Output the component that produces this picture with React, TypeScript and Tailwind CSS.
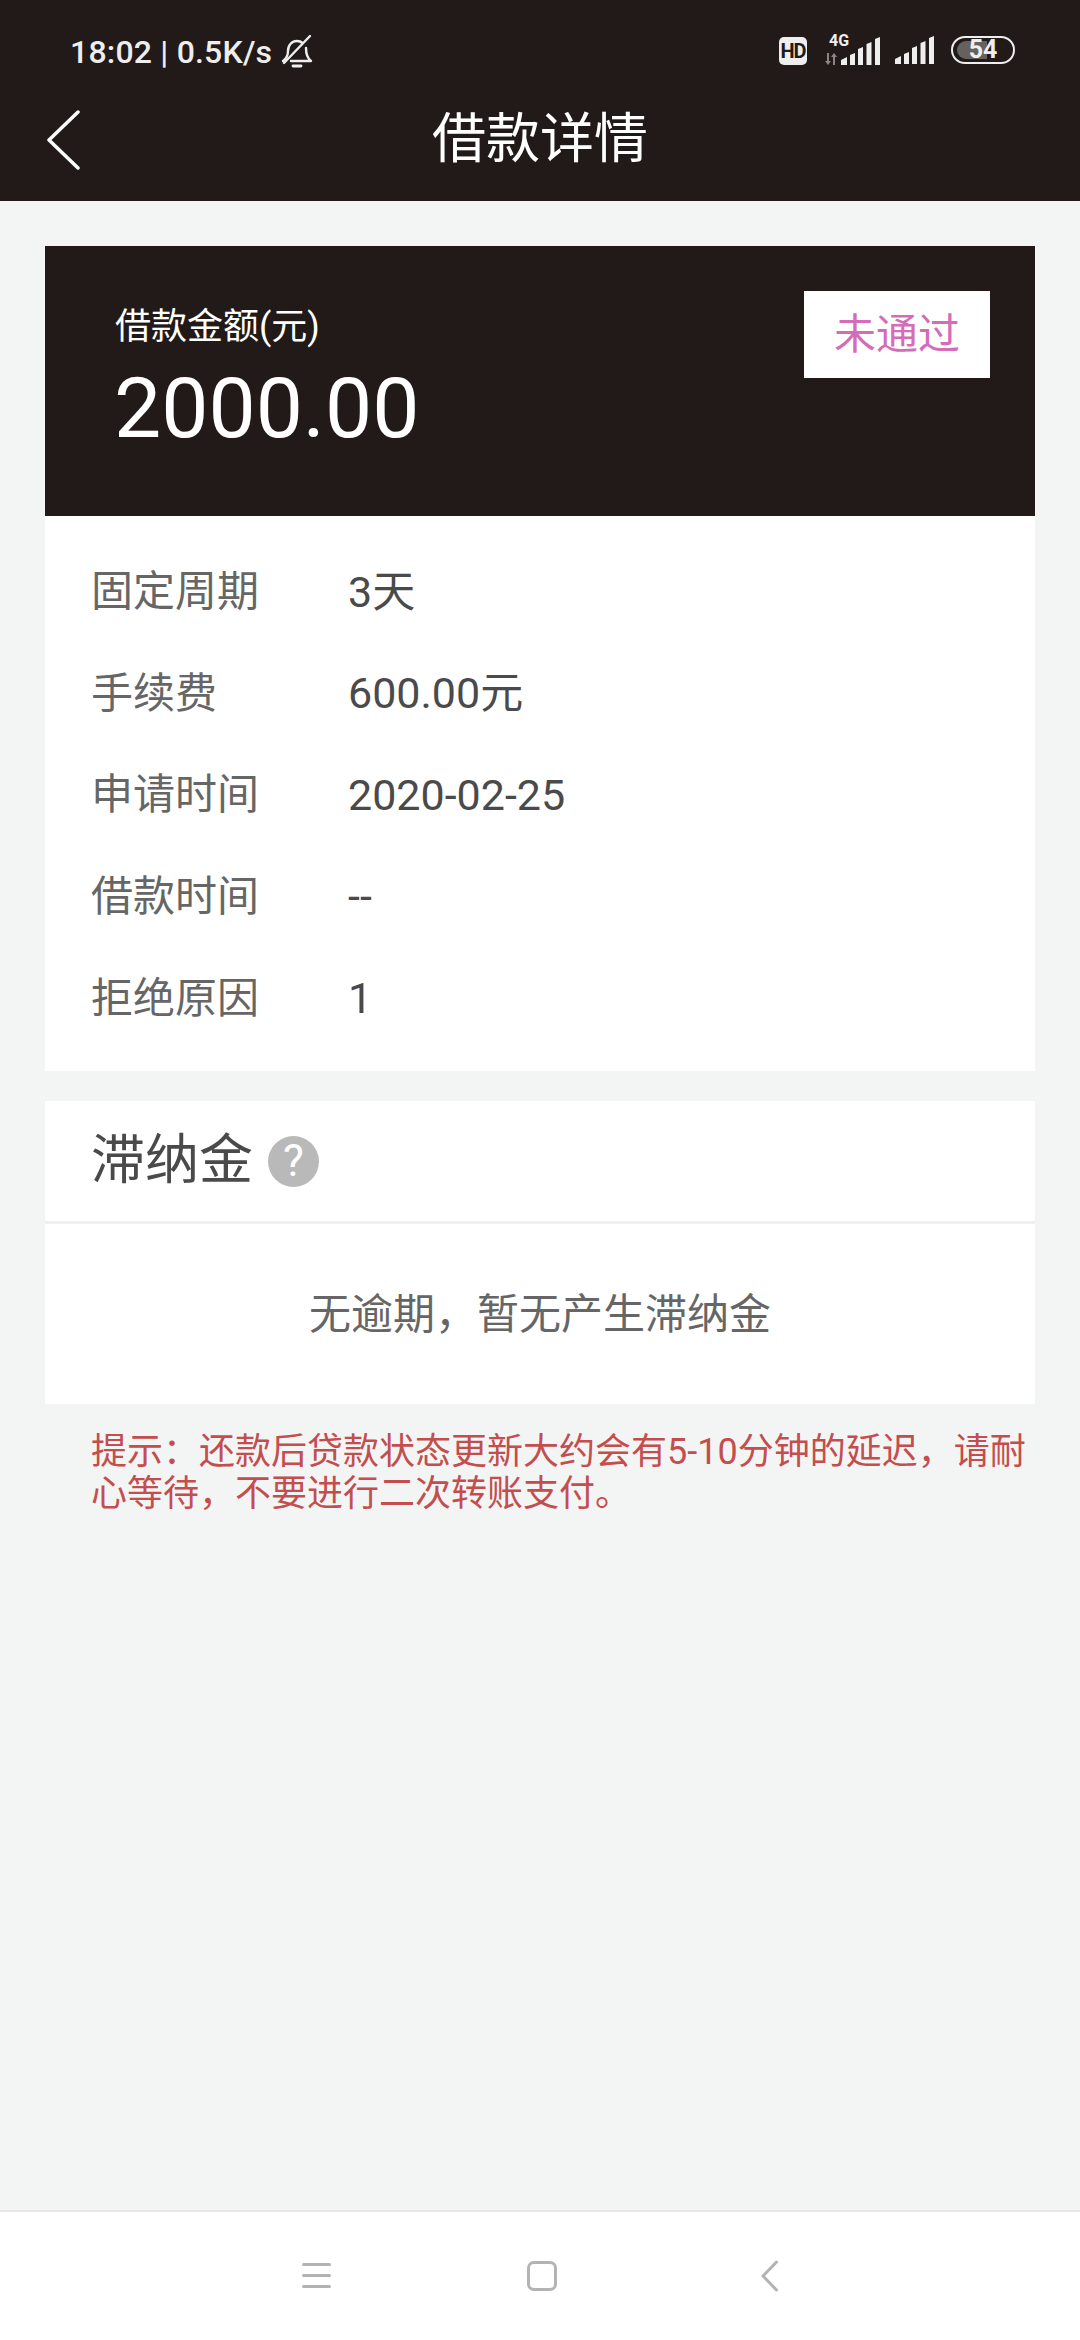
import React from "react";

const rows = [
  { label: "固定周期", value: "3天" },
  { label: "手续费", value: "600.00元" },
  { label: "申请时间", value: "2020-02-25" },
  { label: "借款时间", value: "--" },
  { label: "拒绝原因", value: "1" },
];

function Bars() {
  return (
    <svg width="40" height="28" viewBox="0 0 40 28" fill="#eeeeee">
      <path d="M0 28v-5l6-3v8z" />
      <path d="M9 28V18l5-2v12z" />
      <path d="M17 28V12l5-2v18z" />
      <path d="M25.500 28V7l5-2v23z" />
      <path d="M34 28V2l5-2v28z" />
    </svg>
  );
}

function StatusBar() {
  return (
    <div className="h-[78px] pt-[31px] pl-[70px] pr-[65px] flex items-start justify-between text-[#eeeeee]">
      <div className="flex items-center h-[42px]">
        <span className="text-[32px] leading-[42px] font-medium tracking-[0.2px]">18:02 | 0.5K/s</span>
        <svg className="ml-[9px] -mt-[2px]" width="32" height="34" viewBox="0 0 32 34" fill="none" stroke="#eeeeee" strokeWidth="2.4" strokeLinecap="round" strokeLinejoin="round">
          <path d="M2 27c3-2 5-5 5-10 0-6 4-10 9-10 2 0 4 .6 5.500 2" />
          <path d="M25 14c0 5 1 10 5 13H10" />
          <path d="M29 2 3 29" />
          <path d="M12 32h8" strokeWidth="2.8" />
        </svg>
      </div>
      <div className="flex items-start pt-[5px]">
        <div className="w-[28px] h-[28px] mt-[1px] rounded-[5px] bg-[#eeeeee] text-[#211a18] text-[20px] leading-[28px] font-bold text-center tracking-[-1px]">
          HD
        </div>
        <div className="ml-[17px] relative w-[57px] h-[29px]">
          <span className="absolute left-[5px] top-[-2px] text-[16px] leading-[14px] font-bold">4G</span>
          <svg className="absolute left-0 bottom-0" width="14" height="12" viewBox="0 0 14 12" fill="#8a8584">
            <path d="M3 0h2v8h2l-3 4-3-4h2z" />
            <path d="M9 12h2V4h2l-3-4-3 4h2z" />
          </svg>
          <div className="absolute right-0 bottom-0 h-[28px]">
            <Bars />
          </div>
        </div>
        <div className="ml-[14px] h-[29px]">
          <Bars />
        </div>
        <div className="ml-[16px] relative w-[64px] h-[28px] rounded-full border-[2.5px] border-[#eeeeee]">
          <div className="absolute left-[4px] top-[3px] bottom-[3px] w-[30px] rounded-l-full bg-[#66615f]" />
          <span className="absolute inset-0 text-center text-[25px] leading-[23px] font-bold">54</span>
        </div>
      </div>
    </div>
  );
}

export default function App() {
  return (
    <div className="w-[1080px] h-[2340px] flex flex-col bg-[#f3f5f5] font-['Roboto','Noto_Sans_CJK_SC',sans-serif]">
      <div className="h-[201px] bg-[#211a18] shrink-0">
        <StatusBar />
        <div className="h-[123px] grid grid-cols-[1fr_auto_1fr] items-center">
          <svg className="ml-[46px]" width="34" height="60" viewBox="0 0 34 60" fill="none" stroke="#ffffff" strokeWidth="3.5" strokeLinecap="round" strokeLinejoin="round">
            <path d="M32 2 3 30l29 28" />
          </svg>
          <div className="text-[54px] leading-[70px] text-white">借款详情</div>
          <div />
        </div>
      </div>

      <div className="mx-[45px] mt-[45px] h-[270px] bg-[#211a18] pl-[70px] pr-[45px] pt-[45px] flex justify-between items-start">
        <div className="text-white">
          <div className="text-[36px] leading-[46px] mt-[13px]">借款金额(元)</div>
          <div className="text-[84px] leading-[92px] mt-[13px] -ml-[1px]">2000.00</div>
        </div>
        <div className="w-[186px] h-[87px] bg-white text-[#d46cb8] text-[42px] leading-[87px] text-center">未通过</div>
      </div>

      <div className="mx-[45px] h-[555px] bg-white pl-[46px] pt-[25px] flex flex-col">
        {rows.map((r) => (
          <div key={r.label} className="h-[101.6px] flex items-center">
            <span className="w-[257px] text-[42px] text-[#666666]">{r.label}</span>
            <span className="text-[43px] text-[#4a4a4a]">{r.value}</span>
          </div>
        ))}
      </div>

      <div className="mx-[45px] mt-[30px] bg-white">
        <div className="h-[123px] pl-[46px] flex items-center border-b-[3px] border-[#eff1f1]">
          <span className="text-[54px] leading-[70px] text-[#4a4a4a]">滞纳金</span>
          <div className="ml-[15px] w-[51px] h-[51px] rounded-full bg-[#b9b9b9] text-white text-[44px] leading-[51px] text-center">?</div>
        </div>
        <div className="h-[180px] flex items-center justify-center text-[42px] text-[#666666]">无逾期，暂无产生滞纳金</div>
      </div>

      <div className="mt-[27px] ml-[91px] mr-[45px] text-[36px] leading-[42px] text-[#c44d4d]">
        提示：还款后贷款状态更新大约会有5-10分钟的延迟，请耐心等待，不要进行二次转账支付。
      </div>

      <div className="mt-auto h-[130px] bg-white border-t-[2px] border-[#e6e8e8] flex items-center justify-center pb-[1px]">
        <div className="w-[29px] flex flex-col gap-[8px]">
          <div className="h-[3px] rounded-full bg-[#b3b3b3]" />
          <div className="h-[3px] rounded-full bg-[#b3b3b3]" />
          <div className="h-[3px] rounded-full bg-[#b3b3b3]" />
        </div>
        <div className="ml-[196px] w-[30px] h-[30px] rounded-[7px] border-[3px] border-[#b3b3b3]" />
        <svg className="ml-[204px]" width="17" height="32" viewBox="0 0 17 32" fill="none" stroke="#b3b3b3" strokeWidth="3" strokeLinecap="round" strokeLinejoin="round">
          <path d="M15.500 2 2 16l13.500 14" />
        </svg>
      </div>
    </div>
  );
}
